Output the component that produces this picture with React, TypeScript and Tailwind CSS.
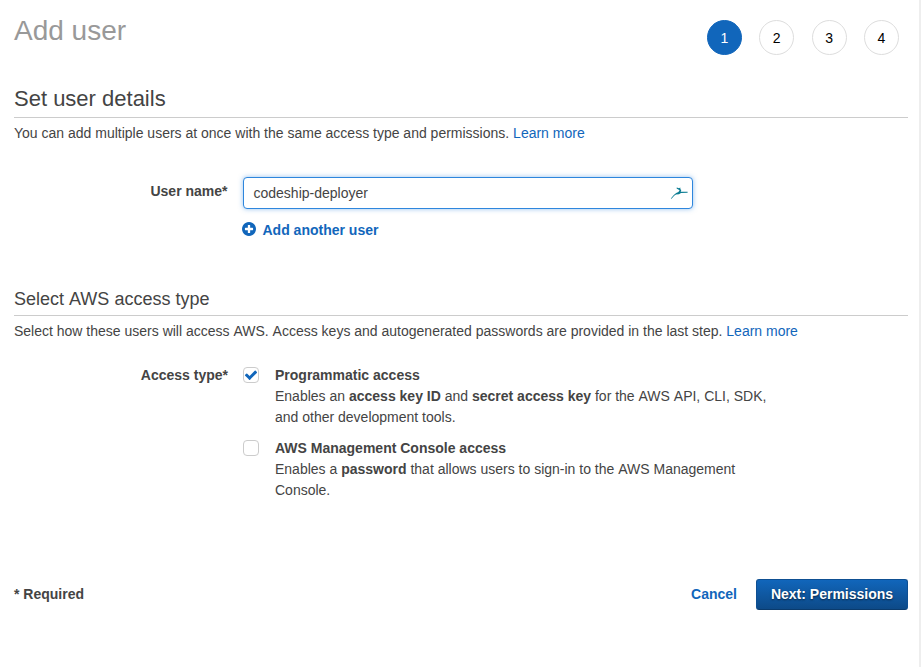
import type { ReactNode } from 'react';

const steps = [1, 2, 3, 4];

function PlusCircle() {
  return (
    <svg viewBox="0 0 1536 1536" className="-mt-[2px] -ml-px size-[14px] fill-[#1166bb]">
      <path d="M1216 832v-128q0-26-19-45t-45-19h-256v-256q0-26-19-45t-45-19h-128q-26 0-45 19t-19 45v256h-256q-26 0-45 19t-19 45v128q0 26 19 45t45 19h256v256q0 26 19 45t45 19h128q26 0 45-19t19-45v-256h256q26 0 45-19t19-45zm320-64q0 209-103 385.500t-279.500 279.500-385.500 103-385.500-103-279.500-279.500-103-385.500 103-385.500 279.500-279.500 385.500-103 385.500 103 279.500 279.500 103 385.500z" />
    </svg>
  );
}

function HummingbirdIcon() {
  return (
    <svg viewBox="0 0 18 14" className="h-[14px] w-[18px]" fill="#0b7c93">
      <path d="M0.8 12.4 L3.8 9 L6.2 6.9 L8.4 6.1 L9.6 4.3 L6.6 2.5 L6.8 1.6 L9 2.2 L10.3 1.4 L10.4 3.2 L11.3 4 L10.7 5.7 L17.6 5.8 L17.6 6.7 L11 6.9 L9 8.3 L6 8.5 L4.2 9.8 L1.5 12.7 Z" />
    </svg>
  );
}

// Keeps a word out of its neighbours' kerning run.
function Word({ children }: { children: ReactNode }) {
  return <span className="inline-block">{children}</span>;
}

function Checkbox({ checked }: { checked?: boolean }) {
  return (
    <span
      role="checkbox"
      aria-checked={!!checked}
      className="mt-[2px] flex size-4 shrink-0 items-center justify-center rounded-[4px] border border-[#cccccc] bg-white"
    >
      {checked && (
        <svg viewBox="0 0 1792 1792" className="size-[14px] shrink-0 fill-[#1166bb]">
          <path d="M1671 566q0 40-28 68l-724 724-136 136q-28 28-68 28t-68-28l-136-136-362-362q-28-28-28-68t28-68l136-136q28-28 68-28t68 28l294 295 656-657q28-28 68-28t68 28l136 136q28 28 28 68z" />
        </svg>
      )}
    </span>
  );
}

function Option({ title, checked, children }: { title: string; checked?: boolean; children: ReactNode }) {
  return (
    <div className="flex gap-4">
      <Checkbox checked={checked} />
      <div className="w-[500px]">
        <div className="font-bold">{title}</div>
        <div>{children}</div>
      </div>
    </div>
  );
}

export default function App() {
  return (
    <div className="h-[667px] w-[921px] overflow-hidden border-r-2 border-[#eeeeee] bg-white pr-[11px] pl-[14px] font-['Liberation_Sans',Arial,sans-serif] text-[14px] leading-[21px] text-[#444444]">
      <header className="flex h-[85px] items-start justify-between pr-[9px]">
        <h1 className="mt-[15px] text-[28px] leading-[32px] text-[#999999]">Add user</h1>
        <ol className="mt-5 flex gap-[17.4px]">
          {steps.map((n) => (
            <li
              key={n}
              className={
                n === 1
                  ? 'flex size-[35px] items-center justify-center rounded-full border border-[#1166bb] bg-[#1166bb] pt-[2px] text-white'
                  : 'flex size-[35px] items-center justify-center rounded-full border border-[#dddddd] pt-[2px] text-black'
              }
            >
              {n}
            </li>
          ))}
        </ol>
      </header>

      <section className="h-[202px]">
        <h2 className="h-[33px] border-b border-[#cccccc] pt-px text-[22px] leading-[26px]">Set user details</h2>
        <p className="mt-[5px]">
          You can add multiple users at once with the same access type and permissions.{' '}
          <a className="text-[#1166bb]">Learn more</a>
        </p>
        <div className="mt-[33px] flex">
          <label className="mt-[4px] mr-[0.5px] w-[213.5px] text-right font-bold">User name*</label>
          <div className="ml-[15px]">
            <div className="flex h-8 w-[450px] items-center justify-between rounded-[4px] border border-[#2e86dd] bg-white pr-[4px] pl-[9.5px] shadow-[0_0_5px_rgba(46,134,221,0.5)]">
              <span>codeship-deployer</span>
              <HummingbirdIcon />
            </div>
            <a className="mt-[11px] flex items-center font-bold text-[#1166bb]">
              <span className="-mt-px mr-[6.5px]">
                <PlusCircle />
              </span>
              Add another user
            </a>
          </div>
        </div>
      </section>

      <section className="h-[292px]">
        <h3 className="h-[29px] border-b border-[#cccccc] text-[18px] leading-[24px]">
          Select <Word>AWS</Word> access type
        </h3>
        <p className="mt-[5px]">
          Select how these users will access <Word>AWS.</Word> <Word>Access</Word> keys and autogenerated passwords are
          provided in the last step. <a className="text-[#1166bb]">Learn more</a>
        </p>
        <div className="mt-[23px] flex">
          <div className="w-[214px] text-right font-bold">Access type*</div>
          <div className="ml-[15px] flex flex-col gap-[10px]">
            <Option title="Programmatic access" checked>
              Enables an <b>access key ID</b> and <b>secret access key</b> for the <Word>AWS</Word> <Word>API,</Word>{' '}
              CLI, SDK, and other development tools.
            </Option>
            <Option title="AWS Management Console access">
              Enables a <b>password</b> that allows users to sign-in to the <Word>AWS</Word> Management Console.
            </Option>
          </div>
        </div>
      </section>

      <footer className="flex h-[31px] items-center font-bold">
        <span>* Required</span>
        <a className="mr-[19px] ml-auto text-[#1166bb]">Cancel</a>
        <button className="h-[31px] w-[152px] rounded-[3px] border border-[#0e4f92] border-b-[#0a3b6d] bg-linear-to-b from-[#1166bb] to-[#0d4a88] text-center font-bold text-white [text-shadow:0_1px_2px_rgba(0,0,0,0.6)]">
          Next: Permissions
        </button>
      </footer>
    </div>
  );
}
